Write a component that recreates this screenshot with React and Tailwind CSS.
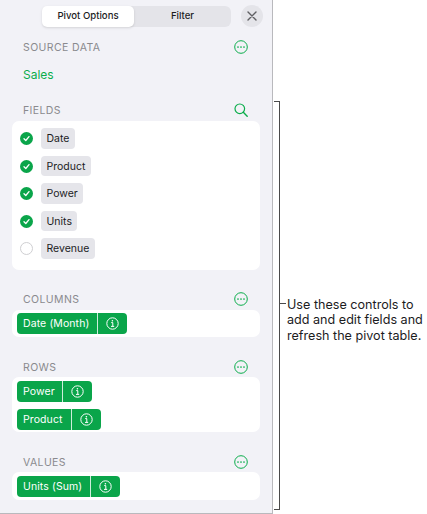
import React from 'react';

const GREEN = 'text-[#0bad4b]';

function MoreIcon() {
  return (
    <svg width="14" height="14" viewBox="0 0 14 14" fill="none" className={GREEN}>
      <circle cx="7" cy="7" r="6.3" stroke="currentColor" strokeWidth="1" />
      <circle cx="4" cy="7" r="0.85" fill="currentColor" />
      <circle cx="7" cy="7" r="0.85" fill="currentColor" />
      <circle cx="10" cy="7" r="0.85" fill="currentColor" />
    </svg>
  );
}

function SearchIcon() {
  return (
    <svg width="14" height="14" viewBox="0 0 14 14" fill="none" className={GREEN}>
      <circle cx="5.8" cy="5.8" r="4.8" stroke="currentColor" strokeWidth="1.2" />
      <path d="M9.3 9.3L13.2 13.2" stroke="currentColor" strokeWidth="1.4" strokeLinecap="round" />
    </svg>
  );
}

function InfoIcon() {
  return (
    <svg width="13" height="13" viewBox="0 0 13 13" fill="none" className="text-white">
      <circle cx="6.5" cy="6.5" r="5.7" stroke="currentColor" strokeWidth="1" />
      <circle cx="6.4" cy="3.7" r="0.8" fill="currentColor" />
      <path d="M5.2 5.6H6.8V9.3M5 9.4H8.2" stroke="currentColor" strokeWidth="1" />
    </svg>
  );
}

function SectionHead({ label, icon, className }) {
  return (
    <div className={`flex items-center justify-between pl-[23px] pr-[24px] h-[14px] ${className}`}>
      <span className="pt-[2px] text-[10.5px] leading-none tracking-[0.4px] text-[#8a8a8e]">{label}</span>
      {icon}
    </div>
  );
}

function FieldRow({ label, checked }) {
  return (
    <div className="flex items-center gap-[8px] h-[20.5px]">
      {checked ? (
        <span className="w-[13px] h-[13px] rounded-full bg-[#0aa54a] flex items-center justify-center">
          <svg width="9" height="9" viewBox="0 0 9 9" fill="none">
            <path d="M2 4.7L3.8 6.5L7 2.6" stroke="white" strokeWidth="1.3" strokeLinecap="round" strokeLinejoin="round" />
          </svg>
        </span>
      ) : (
        <span className="w-[13px] h-[13px] rounded-full border border-[#cfcfd2] bg-white" />
      )}
      <span className="h-[20.5px] px-[5.5px] pt-[1px] flex items-center rounded-[4px] bg-[#e5e5ea] text-[10.5px] text-[#1c1c1e]">{label}</span>
    </div>
  );
}

function Pill({ label, w }) {
  return (
    <div className="flex h-[20.5px] w-fit rounded-[4px] bg-[#0aa54a] text-white overflow-hidden">
      <span className={`flex items-center pl-[6px] pt-[1px] text-[10.5px] tracking-[0.1px] border-r border-white/80 ${w}`}>{label}</span>
      <span className="w-[29px] flex items-center justify-center">
        <InfoIcon />
      </span>
    </div>
  );
}

export default function App() {
  return (
    <div className="flex w-[427px] h-[514px] bg-white font-['Inter','Liberation_Sans',sans-serif] overflow-hidden">
      <div className="w-[273px] h-[514px] shrink-0 bg-[#f2f2f7] border-r border-b border-[#b9b9bd]">
        {/* Top tabs */}
        <div className="flex items-center pl-[42px] pt-[5px] h-[27px]">
          <div className="flex w-[189px] h-[21px] rounded-[6px] bg-[#e4e4e9] text-[9.6px] font-medium text-[#1c1c1e]">
            <span className="w-[92px] rounded-[5px] bg-white shadow-sm flex items-center justify-center">Pivot Options</span>
            <span className="flex-1 flex items-center justify-center">Filter</span>
          </div>
          <span className="ml-[10px] w-[22px] h-[22px] rounded-full bg-[#e4e4e9] flex items-center justify-center">
            <svg width="10" height="10" viewBox="0 0 10 10" fill="none">
              <path d="M1 1L9 9M9 1L1 9" stroke="#5f5f63" strokeWidth="1.4" strokeLinecap="round" />
            </svg>
          </span>
        </div>

        <SectionHead label="SOURCE DATA" icon={<MoreIcon />} className="mt-[13px]" />
        <div className={`pl-[23px] mt-[14px] h-[14px] flex items-center text-[12px] ${GREEN}`}>Sales</div>

        <SectionHead label="FIELDS" icon={<SearchIcon />} className="mt-[21px]" />
        <div className="mx-[12px] mt-[4px] h-[149px] rounded-[7px] bg-white pl-[8px] pt-[7.4px] flex flex-col gap-[7px]">
          <FieldRow label="Date" checked />
          <FieldRow label="Product" checked />
          <FieldRow label="Power" checked />
          <FieldRow label="Units" checked />
          <FieldRow label="Revenue" />
        </div>

        <SectionHead label="COLUMNS" icon={<MoreIcon />} className="mt-[22px]" />
        <div className="mx-[12px] mt-[4px] h-[27px] rounded-[7px] bg-white pl-[5px] pt-[3px]">
          <Pill label="Date (Month)" w="w-[81px]" />
        </div>

        <SectionHead label="ROWS" icon={<MoreIcon />} className="mt-[23px]" />
        <div className="mx-[12px] mt-[3px] h-[55px] rounded-[7px] bg-white pl-[5px] pt-[4px] flex flex-col gap-[7.5px]">
          <Pill label="Power" w="w-[46px]" />
          <Pill label="Product" w="w-[55px]" />
        </div>

        <SectionHead label="VALUES" icon={<MoreIcon />} className="mt-[23px]" />
        <div className="mx-[12px] mt-[3px] h-[28px] rounded-[7px] bg-white pl-[5px] pt-[4px]">
          <Pill label="Units (Sum)" w="w-[74px]" />
        </div>
      </div>

      {/* Callout bracket */}
      <div className="w-[6px] h-[409px] mt-[101px] ml-[1px] shrink-0 border-t border-r border-b border-[#4a4a4a]" />
      <div className="h-[1px] w-[6px] mt-[303px] bg-[#4a4a4a] shrink-0" />
      <p className="ml-[1px] mt-[296.5px] text-[12.6px] leading-[15.5px] text-[#1c1c1e] whitespace-nowrap">
        Use these controls to<br />add and edit fields and<br />refresh the pivot table.
      </p>
    </div>
  );
}
